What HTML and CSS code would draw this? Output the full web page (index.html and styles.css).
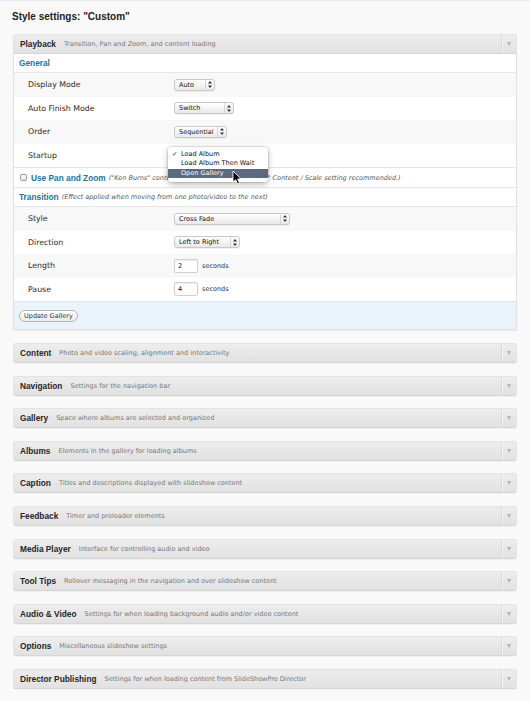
FILE: index.html
```html
<!DOCTYPE html>
<html>
<head>
<meta charset="utf-8">
<title>Style settings</title>
<link rel="stylesheet" href="styles.css">
</head>
<body>
<div class="page">
  <h2 class="title">Style settings: "Custom"</h2>

  <div class="panel open">
    <div class="panel-head">
      <span class="ph-title">Playback</span>
      <span class="ph-desc">Transition, Pan and Zoom, and content loading</span>
      <span class="ph-toggle"></span>
    </div>
    <div class="panel-body">
      <div class="sec-head"><span class="sec-title">General</span></div>
      <div class="rows">
        <div class="row">
          <span class="label">Display Mode</span>
          <span class="select w-auto"><span class="sel-text">Auto</span><span class="sel-arrows"><svg width="4" height="7" viewBox="0 0 4 7"><path d="M2 0L4 2.6H0Z M2 7L4 4.4H0Z" fill="#333"/></svg></span></span>
        </div>
        <div class="row">
          <span class="label">Auto Finish Mode</span>
          <span class="select w-switch"><span class="sel-text">Switch</span><span class="sel-arrows"><svg width="4" height="7" viewBox="0 0 4 7"><path d="M2 0L4 2.6H0Z M2 7L4 4.4H0Z" fill="#333"/></svg></span></span>
        </div>
        <div class="row">
          <span class="label">Order</span>
          <span class="select w-seq"><span class="sel-text">Sequential</span><span class="sel-arrows"><svg width="4" height="7" viewBox="0 0 4 7"><path d="M2 0L4 2.6H0Z M2 7L4 4.4H0Z" fill="#333"/></svg></span></span>
        </div>
        <div class="row startup">
          <span class="label">Startup</span>
          <!-- the Startup select is open: its option list covers the control -->
          <div class="menu">
            <div class="menu-item checked">Load Album</div>
            <div class="menu-item">Load Album Then Wait</div>
            <div class="menu-item hl">Open Gallery</div>
          </div>
          <svg class="cursor" width="10" height="15" viewBox="0 0 10 15"><path d="M1 1V12.2L3.6 9.8L5.6 14L7.6 13.1L5.6 9H9.2Z" fill="#000" stroke="#fff" stroke-width="0.9" stroke-linejoin="round"/></svg>
        </div>
      </div>

      <div class="sec-head pan">
        <span class="cb"></span>
        <span class="sec-title">Use Pan and Zoom</span>
        <span class="sec-note">("Ken Burns" content motion effects. "Crop to Fit" Content / Scale setting recommended.)</span>
      </div>
      <div class="sec-head">
        <span class="sec-title">Transition</span>
        <span class="sec-note">(Effect applied when moving from one photo/video to the next)</span>
      </div>
      <div class="rows">
        <div class="row">
          <span class="label">Style</span>
          <span class="select w-cross"><span class="sel-text">Cross Fade</span><span class="sel-arrows"><svg width="4" height="7" viewBox="0 0 4 7"><path d="M2 0L4 2.6H0Z M2 7L4 4.4H0Z" fill="#333"/></svg></span></span>
        </div>
        <div class="row">
          <span class="label">Direction</span>
          <span class="select w-ltr"><span class="sel-text">Left to Right</span><span class="sel-arrows"><svg width="4" height="7" viewBox="0 0 4 7"><path d="M2 0L4 2.6H0Z M2 7L4 4.4H0Z" fill="#333"/></svg></span></span>
        </div>
        <div class="row">
          <span class="label">Length</span>
          <span class="field"><span class="num">2</span><span class="unit">seconds</span></span>
        </div>
        <div class="row">
          <span class="label">Pause</span>
          <span class="field"><span class="num">4</span><span class="unit">seconds</span></span>
        </div>
      </div>
      <div class="panel-foot">
        <span class="btn">Update Gallery</span>
      </div>
    </div>
  </div>

  <div class="panel"><div class="panel-head"><span class="ph-title">Content</span><span class="ph-desc">Photo and video scaling, alignment and interactivity</span><span class="ph-toggle"></span></div></div>
  <div class="panel"><div class="panel-head"><span class="ph-title">Navigation</span><span class="ph-desc">Settings for the navigation bar</span><span class="ph-toggle"></span></div></div>
  <div class="panel"><div class="panel-head"><span class="ph-title">Gallery</span><span class="ph-desc">Space where albums are selected and organized</span><span class="ph-toggle"></span></div></div>
  <div class="panel"><div class="panel-head"><span class="ph-title">Albums</span><span class="ph-desc">Elements in the gallery for loading albums</span><span class="ph-toggle"></span></div></div>
  <div class="panel"><div class="panel-head"><span class="ph-title">Caption</span><span class="ph-desc">Titles and descriptions displayed with slideshow content</span><span class="ph-toggle"></span></div></div>
  <div class="panel"><div class="panel-head"><span class="ph-title">Feedback</span><span class="ph-desc">Timer and preloader elements</span><span class="ph-toggle"></span></div></div>
  <div class="panel"><div class="panel-head"><span class="ph-title">Media Player</span><span class="ph-desc">Interface for controlling audio and video</span><span class="ph-toggle"></span></div></div>
  <div class="panel"><div class="panel-head"><span class="ph-title">Tool Tips</span><span class="ph-desc">Rollover messaging in the navigation and over slideshow content</span><span class="ph-toggle"></span></div></div>
  <div class="panel"><div class="panel-head"><span class="ph-title">Audio &amp; Video</span><span class="ph-desc">Settings for when loading background audio and/or video content</span><span class="ph-toggle"></span></div></div>
  <div class="panel"><div class="panel-head"><span class="ph-title">Options</span><span class="ph-desc">Miscellaneous slideshow settings</span><span class="ph-toggle"></span></div></div>
  <div class="panel"><div class="panel-head"><span class="ph-title">Director Publishing</span><span class="ph-desc">Settings for when loading content from SlideShowPro Director</span><span class="ph-toggle"></span></div></div>
</div>
</body>
</html>
```

FILE: styles.css
```css
html, body {
  margin: 0;
  padding: 0;
}

body {
  width: 530px;
  height: 701px;
  overflow: hidden;
  background: #f9f9f9;
  font-family: "DejaVu Sans", sans-serif;
  color: #333;
}

.page {
  border-top: 1px solid #ebebeb;
  padding: 0 13px;
}

.title {
  margin: 0 0 10px -1px;
  padding-top: 9px;
  font: bold 10px/14px "Liberation Sans", Arial, sans-serif;
  color: #222;
}

/* collapsible panels */
.panel {
  margin-bottom: 12.6px;
}

.panel.open {
  margin-bottom: 13px;
}

.panel-head {
  display: flex;
  align-items: center;
  height: 20px;
  box-sizing: border-box;
  padding-left: 6px;
  background: linear-gradient(#ededed, #e1e1e1);
  border: 1px solid #e3e3e3;
  border-bottom-color: #d6d6d6;
  border-radius: 3px;
  box-shadow: 0 1px 1px rgba(0, 0, 0, 0.04);
}

.panel.open .panel-head {
  border-radius: 3px 3px 0 0;
  box-shadow: none;
}

.ph-title {
  font: bold 8.3px "Liberation Sans", Arial, sans-serif;
  color: #262626;
  white-space: nowrap;
}

.ph-desc {
  margin-left: 8px;
  font-size: 6.5px;
  color: #777;
  white-space: nowrap;
}

.ph-toggle {
  margin-left: auto;
  width: 15px;
  height: 100%;
  box-sizing: border-box;
  border-left: 1px solid #d9d9d9;
  box-shadow: inset 1px 0 #f4f4f4;
  display: flex;
  align-items: center;
  justify-content: center;
}

.ph-toggle::after {
  content: "";
  border-left: 2.5px solid transparent;
  border-right: 2.5px solid transparent;
  border-top: 4px solid #b3b3b3;
}

.panel-body {
  background: #fff;
  border: 1px solid #e1e1e1;
  border-top: 0;
  box-shadow: 0 1px 1px rgba(0, 0, 0, 0.05);
}

/* section headings inside the open panel */
.sec-head {
  display: flex;
  align-items: center;
  height: 19px;
  box-sizing: border-box;
  padding-left: 5px;
  border-bottom: 1px solid #e6e6e6;
  background: #fff;
}

.sec-head.pan {
  height: 21px;
  border-top: 1px solid #e6e6e6;
}

.sec-title {
  font: bold 8.3px "Liberation Sans", Arial, sans-serif;
  color: #21759b;
  white-space: nowrap;
}

.sec-note {
  margin-left: 3px;
  font-size: 6.5px;
  font-style: italic;
  color: #555;
  white-space: nowrap;
}

.cb {
  width: 7px;
  height: 7px;
  box-sizing: border-box;
  margin: 0 4px 0 1px;
  border: 1px solid #9b9b9b;
  border-radius: 2px;
  background: linear-gradient(#fff, #e4e4e4);
}

/* setting rows */
.row {
  display: grid;
  grid-template-columns: 146px auto;
  align-items: center;
  height: 23.5px;
  padding-left: 14px;
}

.rows .row:nth-child(odd) {
  background: #f8f8f8;
}

.row.startup {
  position: relative;
}

.label {
  font-size: 7.8px;
  color: #2a2a2a;
}

.select {
  display: inline-flex;
  align-items: center;
  height: 12px;
  box-sizing: border-box;
  padding-left: 4px;
  border: 1px solid #c8c8c8;
  border-radius: 3px;
  background: linear-gradient(#fff, #e9e9e9);
  box-shadow: 0 1px 0 rgba(0, 0, 0, 0.05);
  font-size: 6.5px;
  color: #111;
  white-space: nowrap;
}

.sel-text {
  flex: 1;
}

.sel-arrows {
  width: 9px;
  height: 100%;
  box-sizing: border-box;
  border-left: 1px solid #d6d6d6;
  display: flex;
  align-items: center;
  justify-content: center;
}

.w-auto { width: 41px; }
.w-switch { width: 60px; }
.w-seq { width: 53px; }
.w-cross { width: 116px; }
.w-ltr { width: 66px; }

.field {
  display: flex;
  align-items: center;
}

.num {
  display: inline-flex;
  align-items: center;
  width: 24px;
  height: 14px;
  box-sizing: border-box;
  padding-left: 3px;
  border: 1px solid #d0d0d0;
  border-radius: 2px;
  background: #fff;
  box-shadow: inset 0 1px 1px rgba(0, 0, 0, 0.08);
  font-size: 6.5px;
  color: #111;
}

.unit {
  margin-left: 4px;
  font-size: 6.5px;
  color: #333;
}

/* open option list of the Startup select */
.menu {
  position: absolute;
  left: 154px;
  top: 3px;
  z-index: 2;
  width: 100px;
  padding: 3px 0 3.5px;
  background: rgba(255, 255, 255, 0.98);
  border-radius: 4px;
  box-shadow: 0 2px 6px rgba(0, 0, 0, 0.3), 0 0 0 1px rgba(0, 0, 0, 0.09);
  font-size: 6.5px;
  color: #111;
}

.menu-item {
  position: relative;
  height: 9.5px;
  line-height: 9.5px;
  padding-left: 13px;
  white-space: nowrap;
}

.menu-item.checked::before {
  content: "\2713";
  position: absolute;
  left: 4px;
}

.menu-item.hl {
  background: #5b6a7f;
  color: #fff;
}

.cursor {
  position: absolute;
  left: 218px;
  top: 26px;
  z-index: 3;
}

.panel-foot {
  display: flex;
  align-items: center;
  height: 28px;
  box-sizing: border-box;
  padding-left: 5px;
  background: #eaf2fa;
  border-top: 1px solid #dbe4ed;
}

.btn {
  display: inline-flex;
  align-items: center;
  height: 12px;
  box-sizing: border-box;
  padding: 0 4px;
  border: 1px solid #b3b3b3;
  border-radius: 7px;
  background: linear-gradient(#fff, #ebebeb);
  font-size: 6.5px;
  color: #333;
}
```
